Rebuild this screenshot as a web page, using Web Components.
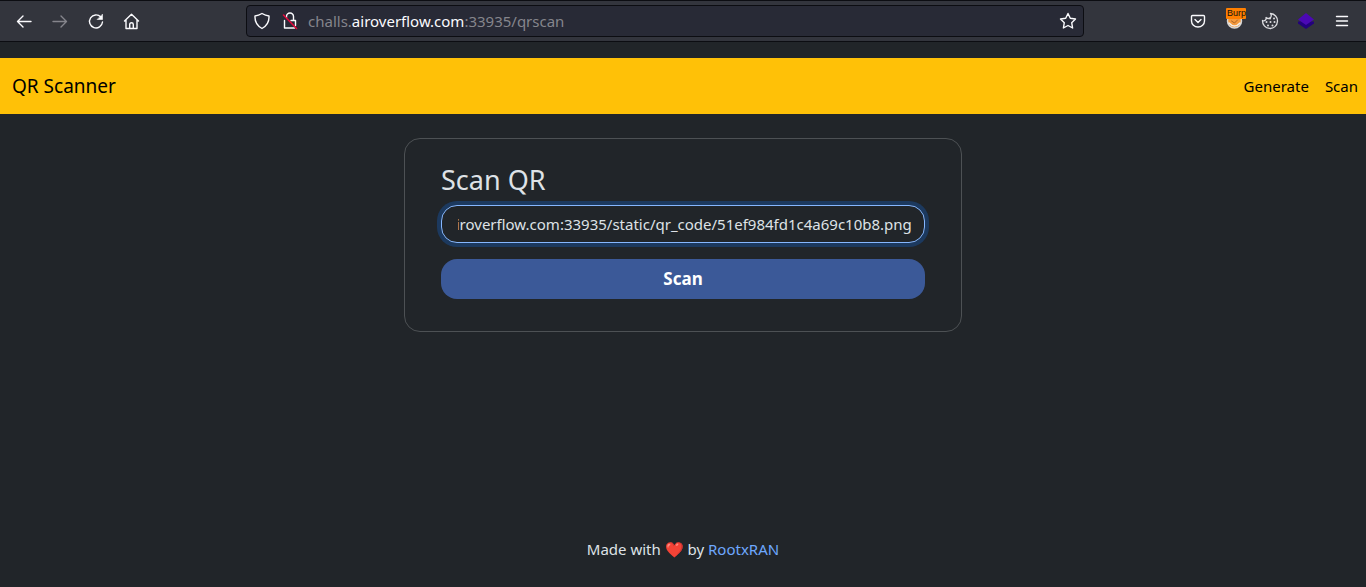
<!DOCTYPE html>
<html lang="en">
<head>
<meta charset="utf-8">
<title>QR Scanner</title>
<style>
html, body { margin: 0; height: 100%; }
body { background: #212529; color: #dee2e6; font: 15px/24px "Noto Sans", sans-serif; }
</style>
</head>
<body>
<qr-app></qr-app>
<script>
const define = (name, html, setup) => {
  const template = document.createElement('template');
  template.innerHTML = html;
  customElements.define(name, class extends HTMLElement {
    connectedCallback() {
      if (this.shadowRoot) return;
      this.attachShadow({ mode: 'open' }).append(template.content.cloneNode(true));
      if (setup) setup(this.shadowRoot);
    }
  });
};

define('tool-button', `
<style>
:host { display: block; color: #fbfbfe; }
:host([dim]) { color: #85858c; }
button { all: unset; box-sizing: border-box; display: grid; place-items: center; width: 20px; height: 20px; }
</style>
<button type="button"><slot></slot></button>`,
root => root.querySelector('button').setAttribute('aria-label', root.host.getAttribute('label')));

define('address-bar', `
<style>
:host { display: flex; flex: 0 1 838px; min-width: 0; box-sizing: border-box; height: 32px; align-items: center;
  background: #282a36; border: 1px solid #0c0d12; border-radius: 4px; padding: 0 5px; gap: 8px;
  font-size: 15px; line-height: 20px; color: #85858c; }
.url { flex: 1; white-space: nowrap; overflow: hidden; }
b { font-weight: 400; color: #fbfbfe; }
svg { display: block; fill: none; stroke: currentColor; stroke-width: 1.4; stroke-linecap: round; stroke-linejoin: round; }
</style>
<tool-button label="Tracking protection"><svg width="18" height="18" viewBox="0 0 18 18"><path d="M9 1.500 Q12.500 3.500 16 4 Q16.500 12.500 9 16.500 Q1.500 12.500 2 4 Q5.500 3.500 9 1.500Z"/></svg></tool-button>
<tool-button label="Connection not secure"><svg width="18" height="18" viewBox="0 0 18 18"><path d="M5.500 5.500V4.500a3.500 3.500 0 0 1 7 0V8.500M3.500 8.500v7.500h10M10 8.500h4.500v5"/><path d="M2.500 3l13 13.500" stroke="#e2093d" stroke-width="1.600"/></svg></tool-button>
<span class="url">challs.<b>airoverflow.com</b>:33935/qrscan</span>
<tool-button label="Bookmark"><svg width="18" height="18" viewBox="0 0 18 18"><path d="M9 1.500l2.300 4.800 5.200.7-3.800 3.700.9 5.300L9 13.500 4.400 16l.9-5.300L1.500 7l5.200-.7z"/></svg></tool-button>`);

define('browser-bar', `
<style>
:host { display: flex; box-sizing: border-box; height: 42px; align-items: center; justify-content: space-between;
  background: #33353d; border-top: 1px solid #0c0d12; border-bottom: 1px solid #0c0d12; padding: 0 14px; }
.group { display: flex; align-items: center; gap: 16px; }
svg { display: block; overflow: visible; fill: none; stroke: currentColor; stroke-width: 1.4; stroke-linecap: round; stroke-linejoin: round; }
.left { width: 232px; }
.right { width: 268px; justify-content: flex-end; }
.burp { position: relative; }
.badge { position: absolute; left: 2px; top: -3px; width: 20px; height: 11px; box-sizing: border-box; padding-left: 1px;
  background: #ff7f00; color: #101010; border-radius: 1px; font: 9px/11px "Liberation Sans", sans-serif; }
</style>
<div class="group left">
  <tool-button label="Back"><svg width="16" height="16" viewBox="0 0 16 16"><path d="M15 8.500H1.500M7 3L1.500 8.500 7 14"/></svg></tool-button>
  <tool-button label="Forward" dim><svg width="16" height="16" viewBox="0 0 16 16"><path d="M1 8.500h13.500M9 3L14.500 8.500 9 14"/></svg></tool-button>
  <tool-button label="Reload"><svg width="16" height="16" viewBox="0 0 16 16"><path d="M12.800 4A6.500 6.500 0 1 0 14.500 9"/><path d="M14.500 1.500v5h-5z" fill="currentColor" stroke-width=".6"/></svg></tool-button>
  <tool-button label="Home"><svg width="16" height="16" viewBox="0 0 16 16"><path d="M.5 8L7.500 1.200 14.500 8M2 7v8.500h11V7M5.700 15.500v-4a1.800 1.800 0 0 1 3.600 0v4"/></svg></tool-button>
</div>
<address-bar></address-bar>
<div class="group right">
  <tool-button label="Pocket"><svg width="16" height="16" viewBox="0 0 16 16"><path d="M2.500 2.500h11a1 1 0 0 1 1 1V8a6.500 6 0 0 1-13 0V3.500a1 1 0 0 1 1-1zM5 6.500l3 3 3-3"/></svg></tool-button>
  <div class="burp">
    <tool-button label="Burp proxy"><svg width="16" height="16" viewBox="0 0 16 16"><circle cx="8.500" cy="8" r="7" fill="#f49a3e" stroke="#d5d5d5" stroke-width="1.500"/><path d="M3 10q5.500 6 11 0" stroke="#eee"/><path d="M5.500 8l3 2 3-3" stroke="#ad6427" stroke-width="1"/></svg></tool-button>
    <span class="badge">Burp</span>
  </div>
  <tool-button label="Cookies"><svg width="16" height="16" viewBox="0 0 16 16"><path d="M8.500.5a7.500 7.500 0 1 1-8 7 2.500 2.500 0 0 0 3.500-3 2.800 2.800 0 0 0 4.500-4z" stroke="#dcdce0" stroke-width="1.300"/><g fill="#dcdce0" stroke="none"><circle cx="8" cy="5.500" r="1"/><circle cx="12" cy="5.500" r="1"/><circle cx="4.500" cy="9" r="1"/><circle cx="8.500" cy="9" r="1"/><circle cx="12.500" cy="9" r="1"/><circle cx="6" cy="12.500" r="1"/><circle cx="10.500" cy="12.500" r="1"/></g></svg></tool-button>
  <tool-button label="Layers"><svg width="16" height="16" viewBox="0 0 16 16"><path d="M0 8.500h16v2L8 16 0 10.500z" fill="#23017d" stroke="none"/><path d="M8 0l8 6.500L8 12 0 6.500z" fill="#4b08b5" stroke="none"/></svg></tool-button>
  <tool-button label="Menu"><svg width="16" height="16" viewBox="0 0 16 16"><path d="M2.500 3.500h11M2.500 8h11M2.500 12.500h11"/></svg></tool-button>
</div>`);

define('site-nav', `
<style>
:host { display: flex; box-sizing: border-box; height: 56px; align-items: center; justify-content: space-between;
  margin-top: 16px; padding: 0 8px 0 12px; background: #ffc107; }
a { color: #000; text-decoration: none; }
.brand { font-size: 19px; line-height: 30px; }
nav { display: flex; gap: 16px; }
</style>
<a class="brand" href="#">QR Scanner</a>
<nav><a href="#generate">Generate</a><a href="#scan">Scan</a></nav>`);

define('scan-card', `
<style>
:host { display: block; box-sizing: border-box; width: 100%; max-width: 558px; margin: 24px auto;
  border: 1px solid #4d5154; border-radius: 16px; padding: 24px 36px 32px; }
form { display: grid; }
label { font-size: 27px; line-height: 34px; margin-bottom: 8px; }
input { box-sizing: border-box; width: 100%; min-width: 0; height: 38px; padding: 0 12px 0 16px; margin-bottom: 16px; border: 1px solid #86b7fe; border-radius: 16px;
  background: #212529; color: #dee2e6; font: inherit; outline: none; box-shadow: 0 0 0 4px #1c395e; }
button { height: 40px; border: 0; border-radius: 16px; background: #3b5998; color: #fff; font: inherit; font-size: 17px; font-weight: 700; }
</style>
<form>
  <label for="url">Scan QR</label>
  <input id="url" type="text" value="http://challs.airoverflow.com:33935/static/qr_code/51ef984fd1c4a69c10b8.png">
  <button type="button">Scan</button>
</form>`,
root => {
  const input = root.querySelector('input');
  const showEnd = () => { input.scrollLeft = input.scrollWidth; };
  showEnd();
  addEventListener('load', showEnd);
});

define('site-footer', `
<style>
:host { display: block; margin-top: auto; padding-bottom: 26px; text-align: center; }
a { color: #6ea8fe; text-decoration: none; }
</style>
Made with ❤️ by <a href="#author">RootxRAN</a>`);

define('qr-app', `
<style>:host { display: flex; flex-direction: column; min-height: 100%; }</style>
<browser-bar></browser-bar>
<site-nav></site-nav>
<scan-card></scan-card>
<site-footer></site-footer>`);
</script>
</body>
</html>
